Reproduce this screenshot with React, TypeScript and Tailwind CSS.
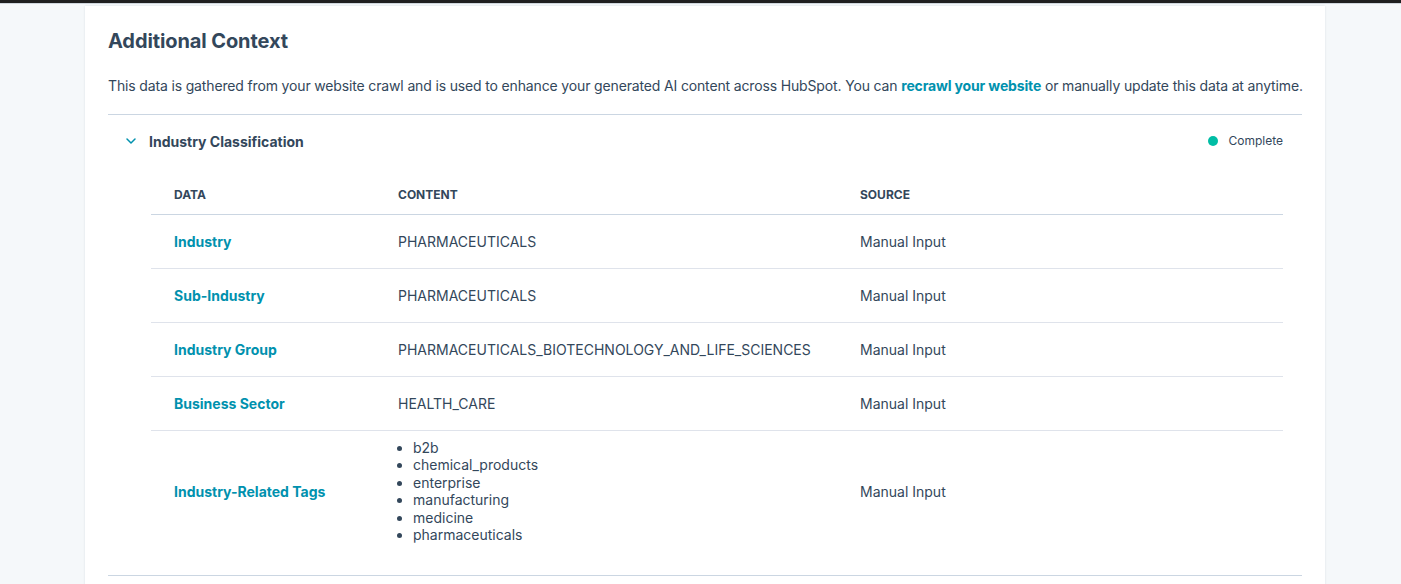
import { ChevronDown } from "lucide-react";

const rows = [
  { label: "Industry", content: "PHARMACEUTICALS", source: "Manual Input" },
  { label: "Sub-Industry", content: "PHARMACEUTICALS", source: "Manual Input" },
  {
    label: "Industry Group",
    content: "PHARMACEUTICALS_BIOTECHNOLOGY_AND_LIFE_SCIENCES",
    source: "Manual Input",
  },
  { label: "Business Sector", content: "HEALTH_CARE", source: "Manual Input" },
];

const tags = [
  "b2b",
  "chemical_products",
  "enterprise",
  "manufacturing",
  "medicine",
  "pharmaceuticals",
];

export default function App() {
  return (
    <div
      className="min-h-[584px] bg-[#f5f8fa] text-[#33475b]"
      style={{ fontFamily: "Inter, 'Noto Sans', sans-serif" }}
    >
      <div className="h-[4px] bg-[#1f1f1f] border-b border-[#cfd6dd]" />
      <div className="flex justify-center pt-[2px] pr-[76px] pl-[85px]">
        <div className="w-full bg-white shadow-[0_0_2px_rgba(45,62,80,0.12)] px-[23px] pt-[25px] pb-[10px]">
          <h2 className="text-[20px] font-bold leading-[20px] tracking-[-0.1px]">
            Additional Context
          </h2>
          <p className="mt-[26px] whitespace-nowrap text-[14px] leading-[18px] tracking-[-0.15px]">
            This data is gathered from your website crawl and is used to enhance your generated AI
            content across HubSpot. You can{" "}
            <a className="font-bold text-[#0091ae]">recrawl your website</a> or manually update
            this data at anytime.
          </p>
          <div className="mt-[19px] border-t border-[#cbd6e2]">
            <div className="flex h-[52px] items-center pl-[15px] pr-[19px]">
              <ChevronDown className="h-[16px] w-[16px] text-[#0091ae]" strokeWidth={2.25} />
              <span className="ml-[10px] text-[14px] font-bold">Industry Classification</span>
              <div className="ml-auto flex items-center gap-[10px] text-[12px]">
                <span className="h-[10px] w-[10px] rounded-full bg-[#00bda5]" />
                <span>Complete</span>
              </div>
            </div>
            <div className="mt-[4px] pl-[43px] pr-[19px] pb-[24px]">
              <div className="grid grid-cols-[224px_462px_1fr] border-b border-[#cbd6e2] h-[44px] items-center pt-[4px] text-[12px] font-bold uppercase">
                <div className="pl-[23px]">Data</div>
                <div className="pl-[23px]">Content</div>
                <div className="pl-[23px]">Source</div>
              </div>
              {rows.map((r) => (
                <div
                  key={r.label}
                  className="grid grid-cols-[224px_462px_1fr] h-[54px] items-center border-b border-[#dfe3eb] text-[14px]"
                >
                  <div className="pl-[23px] font-bold text-[#0091ae]">{r.label}</div>
                  <div className="pl-[23px]">{r.content}</div>
                  <div className="pl-[23px]">{r.source}</div>
                </div>
              ))}
              <div className="grid grid-cols-[224px_462px_1fr] items-center py-[8px] text-[14px]">
                <div className="pl-[23px] font-bold text-[#0091ae]">Industry-Related Tags</div>
                <ul className="list-disc pl-[38px] leading-[17.4px]">
                  {tags.map((t) => (
                    <li key={t} className="marker:text-[#33475b]">
                      {t}
                    </li>
                  ))}
                </ul>
                <div className="pl-[23px]">Manual Input</div>
              </div>
            </div>
            <div className="border-t border-[#cbd6e2]" />
          </div>
          <div className="h-[20px]" />
        </div>
      </div>
    </div>
  );
}
